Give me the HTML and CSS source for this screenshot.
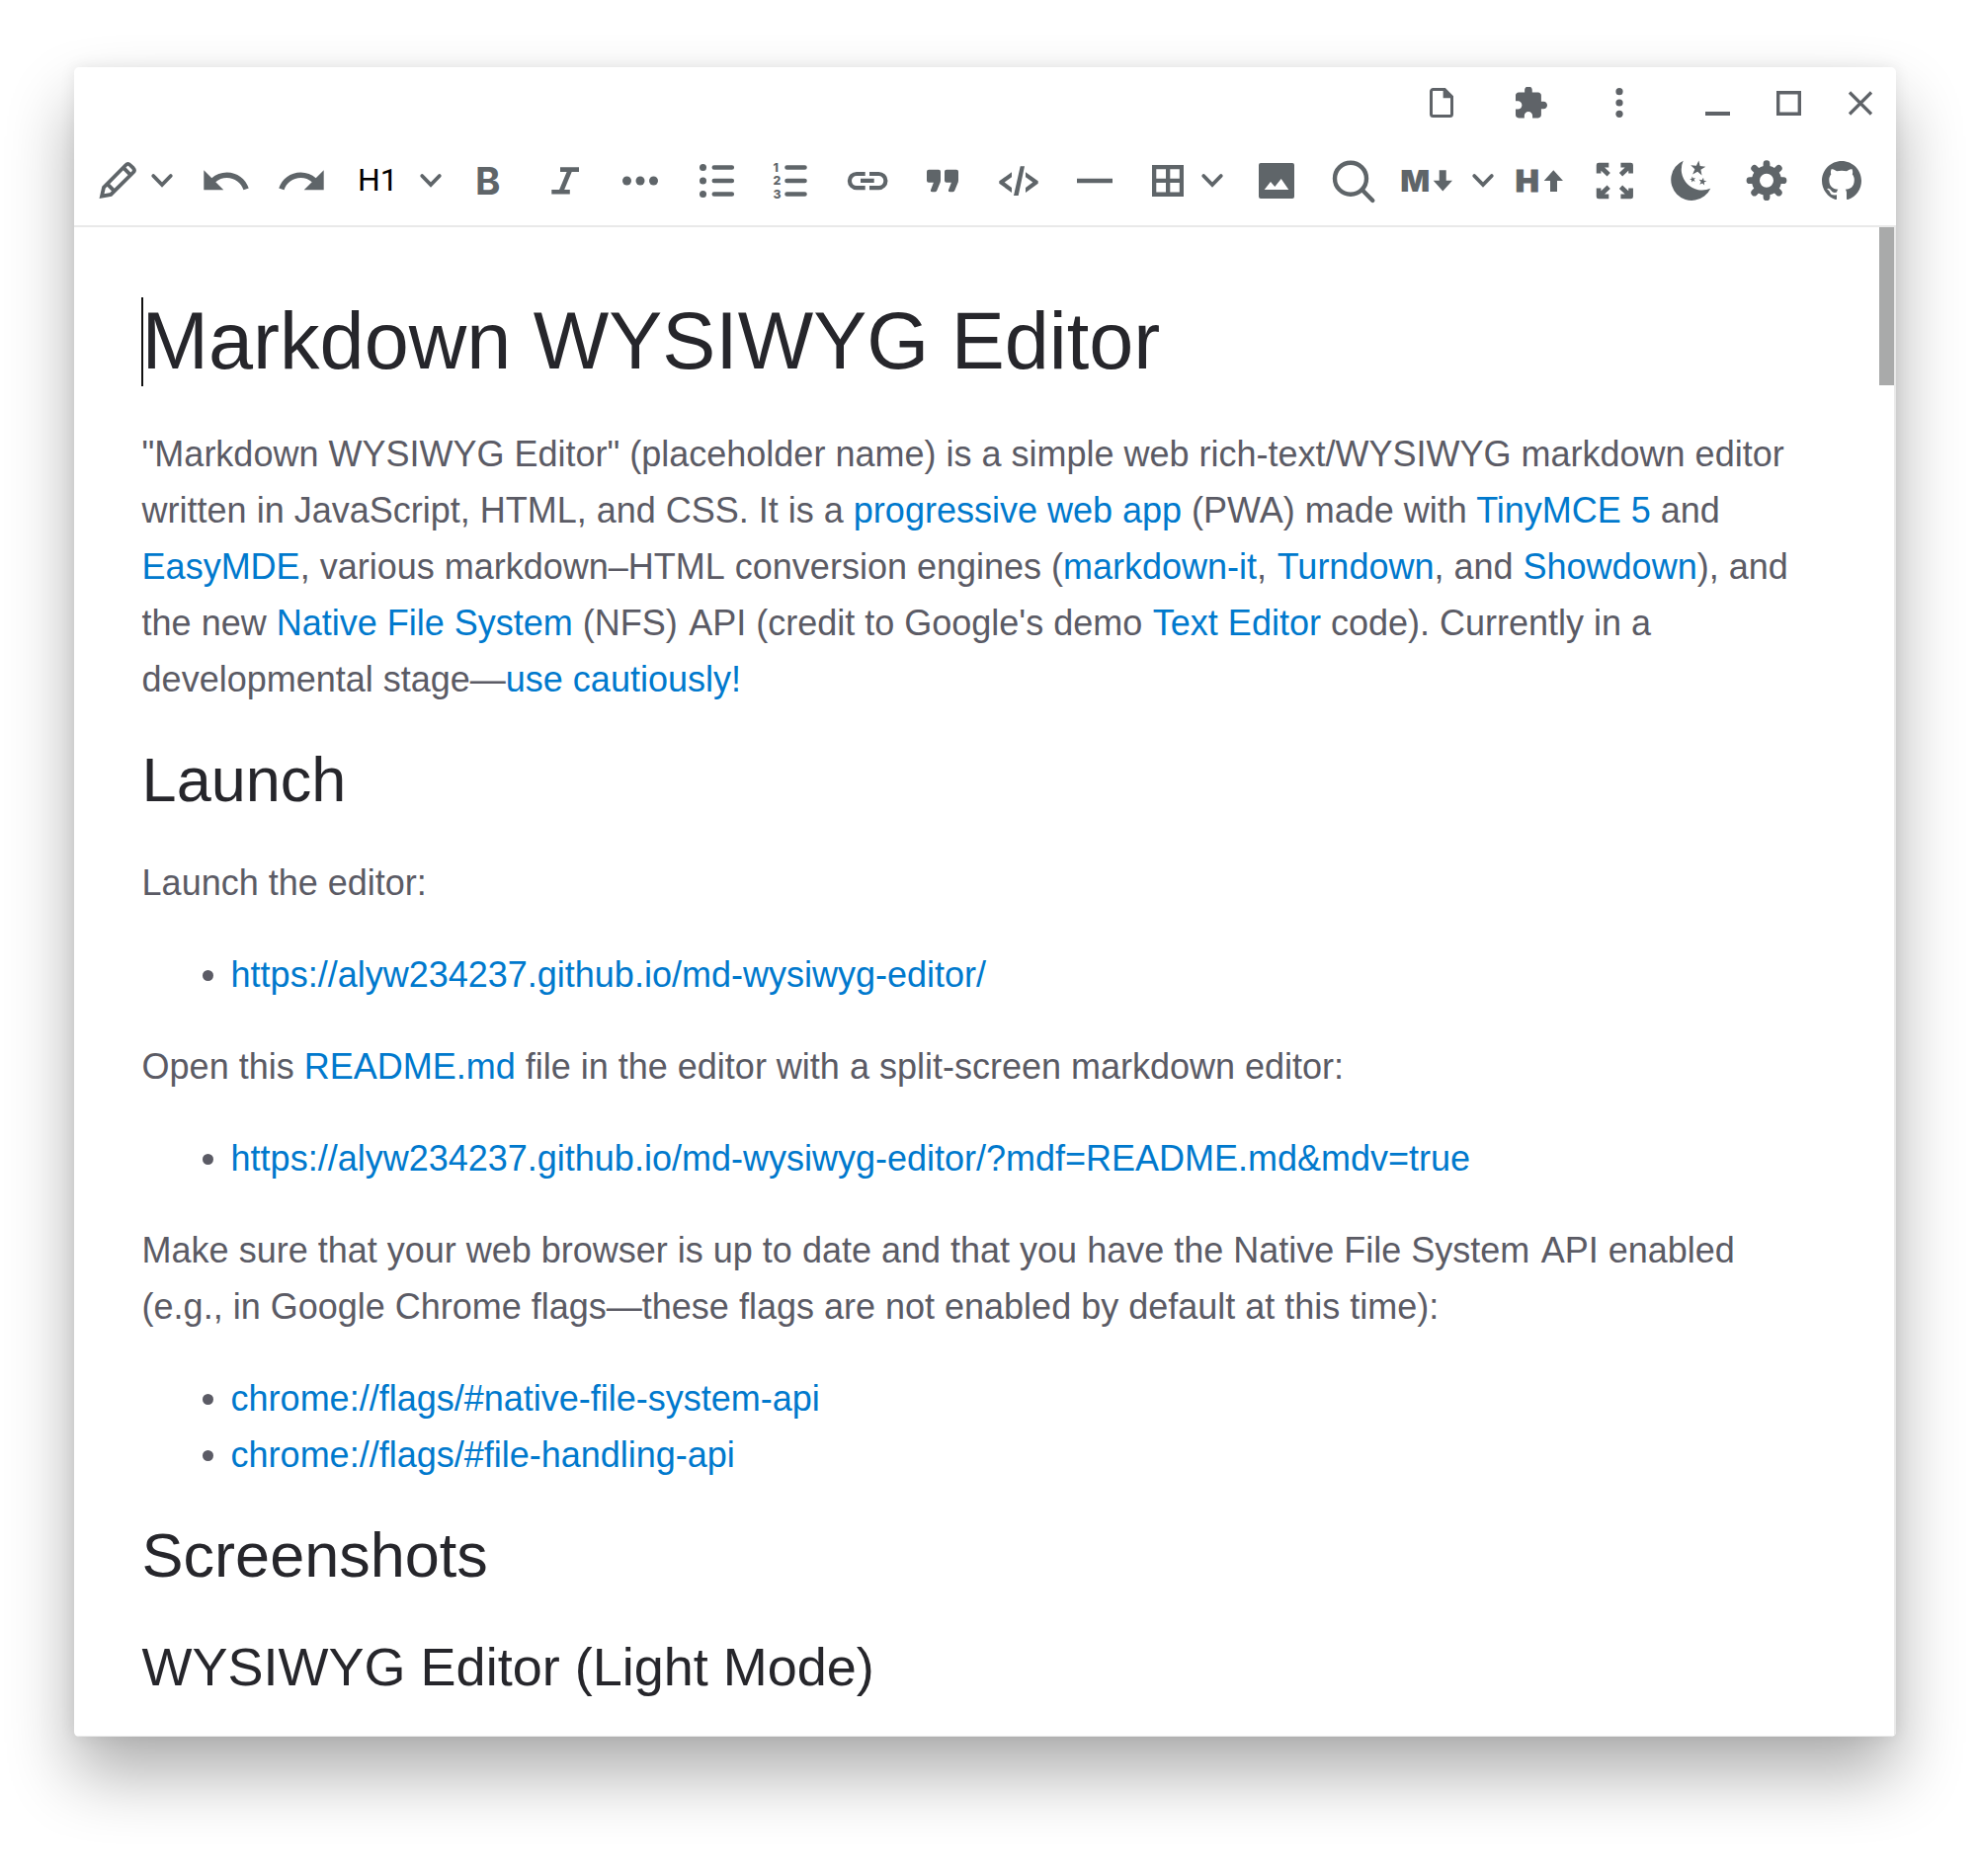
FILE: index.html
```html
<!DOCTYPE html>
<html lang="en">
<head>
<meta charset="utf-8">
<title>Markdown WYSIWYG Editor</title>
<link rel="stylesheet" href="styles.css">
</head>
<body>
<svg class="defs" aria-hidden="true">
  <symbol id="chevron" viewBox="0 0 26 48"><path d="M4.2 19 13 28 21.8 19" fill="none" stroke="currentColor" stroke-width="3.8" stroke-linecap="round"/></symbol>
  <symbol id="undo" viewBox="1.41 1.01 21.62 21.62"><path d="M12.5 8c-2.65 0-5.05.99-6.9 2.6L2 7v9h9l-3.62-3.62c1.39-1.16 3.16-1.88 5.12-1.88 3.54 0 6.55 2.31 7.6 5.5l2.37-.78C21.08 11.03 17.15 8 12.5 8z"/></symbol>
  <path id="star" d="M0-1 .235-.324 .951-.309 .38.124 .588.809 0 .4-.588.809-.38.124-.951-.309-.235-.324z"/>
  <path id="corner" d="M4.1 16.5V8.1H14.3M5 9l9.2 8.8" fill="none" stroke="currentColor" stroke-width="4.700" stroke-linejoin="round"/>
</svg>
<main class="window">
  <header class="titlebar">
    <svg class="w-file" viewBox="0 0 24 32"><path d="M15.2 2.5H3.5a2 2 0 0 0-2 2v23a2 2 0 0 0 2 2h17a2 2 0 0 0 2-2V9.8z" fill="none" stroke="currentColor" stroke-width="3"/><path d="M13.6 2v9.2H23L15.5 2z"/></svg>
    <svg class="w-puzzle" viewBox="2 1.4 21 21"><path d="M20.500 11H19V7c0-1.100-.9-2-2-2h-4V3.500C13 2.120 11.880 1 10.500 1S8 2.120 8 3.500V5H4c-1.100 0-1.990.9-1.990 2v3.800H3.500c1.490 0 2.700 1.210 2.700 2.700s-1.210 2.700-2.700 2.700H2V20c0 1.100.9 2 2 2h3.800v-1.500c0-1.490 1.210-2.700 2.700-2.700 1.490 0 2.700 1.210 2.700 2.700V22H17c1.100 0 2-.9 2-2v-4h1.500c1.380 0 2.500-1.120 2.500-2.500S21.880 11 20.500 11z"/></svg>
    <svg class="w-dots" viewBox="0 0 8 32"><circle cx="4" cy="4.700" r="3.600"/><circle cx="4" cy="16" r="3.600"/><circle cx="4" cy="27.300" r="3.600"/></svg>
    <svg class="w-min" viewBox="0 0 25 32"><path d="M0 25h25v4H0z"/></svg>
    <svg class="w-max" viewBox="0 0 25 32"><path d="M1.700 5.700h21.600v21.600H1.700z" fill="none" stroke="currentColor" stroke-width="3.400"/></svg>
    <svg class="w-close" viewBox="0 0 26 32"><path d="M2 5.500l22 22M24 5.500l-22 22" fill="none" stroke="currentColor" stroke-width="3.200"/></svg>
  </header>
  <nav class="toolbar">
    <svg class="t-pen" viewBox="0 0 42 48"><path d="M4 39.700 6 30.700 28.400 8Q30.500 5.900 32.600 8L35.900 11.200Q38 13.400 35.900 15.500L13.200 37.900ZM9.500 27.200l7.200 7.200M25.800 10.700l7.400 7.400" fill="none" stroke="currentColor" stroke-width="3.800"/></svg>
    <svg class="t-chev pen-menu"><use href="#chevron"/></svg>
    <svg class="t-undo"><use href="#undo"/></svg>
    <svg class="t-redo"><use href="#undo"/></svg>
    <span class="t-format">H1</span>
    <svg class="t-chev format-menu"><use href="#chevron"/></svg>
    <svg class="t-bold" viewBox="0 0 28 48"><text class="glyph bold" x="1" y="38" textLength="25.500" lengthAdjust="spacingAndGlyphs">B</text></svg>
    <svg class="t-italic" viewBox="0 0 32 48"><path d="M11 12.600h19M2.300 35.200h18.500M21 13 11.800 35" fill="none" stroke="currentColor" stroke-width="4.600"/></svg>
    <svg class="t-more" viewBox="0 0 40 48"><circle cx="6.500" cy="24" r="4.500"/><circle cx="20" cy="24" r="4.500"/><circle cx="33.500" cy="24" r="4.500"/></svg>
    <svg class="t-ul" viewBox="0 0 40 48"><circle cx="5.500" cy="10.500" r="3.500"/><circle cx="5.500" cy="24" r="3.500"/><circle cx="5.500" cy="37.500" r="3.500"/><path d="M16.800 10.500h18M16.800 24h18M16.800 37.500h18" stroke="currentColor" stroke-width="4.600" stroke-linecap="round"/></svg>
    <svg class="t-ol" viewBox="0 0 38 48"><g class="digits"><text x="1.500" y="15">1</text><text x="1.500" y="28.300">2</text><text x="1.500" y="41.800">3</text></g><path d="M15.500 10.500h18M15.500 24h18M15.500 37.500h18" stroke="currentColor" stroke-width="4.600" stroke-linecap="round"/></svg>
    <svg class="t-link" viewBox="0 0 44 48"><path d="M19.700 17h-8.700a7.100 7.100 0 0 0 0 14.200h8.700M24 17h9.300a7.100 7.100 0 0 1 0 14.200H24M15 23.800h13.700" fill="none" stroke="currentColor" stroke-width="4.200"/></svg>
    <svg class="t-quote" viewBox="0 0 36 48"><path id="q" d="M4 12.700h10a2 2 0 0 1 2 2v9c0 1-.3 2-.8 3l-3 7.200q-.7 1.400-2 1.400H7.600q-2.400 0-1.400-2.500l2.700-7H4a2 2 0 0 1-2-2v-9.100a2 2 0 0 1 2-2z"/><use href="#q" x="18"/></svg>
    <svg class="t-code" viewBox="0 0 44 48"><path d="M15 15.300 2.300 24.300v2.400L15 36v-5l-7.300-5.600 7.300-5.100zM29 15.300l12.700 9v2.400L29 36v-5l7.300-5.600-7.300-5.100zM23.700 9.300H28L21.700 39H17z"/></svg>
    <svg class="t-hr" viewBox="0 0 40 48"><path d="M2 21.800h36v4.400H2z"/></svg>
    <svg class="t-table" viewBox="0 0 36 48"><path fill-rule="evenodd" d="M2 8h32v32H2zM6.300 12.300v9.500H16v-9.500zM20.300 12.300v9.500h9.500v-9.500zM6.300 26v9.500H16V26zM20.300 26v9.500h9.500V26z"/></svg>
    <svg class="t-chev table-menu"><use href="#chevron"/></svg>
    <svg class="t-image" viewBox="0 0 40 48"><path fill-rule="evenodd" d="M4 6h32a2 2 0 0 1 2 2v32a2 2 0 0 1-2 2H4a2 2 0 0 1-2-2V8a2 2 0 0 1 2-2zM7.700 33h24.600L24.700 22 18.300 30 14 25z"/></svg>
    <svg class="t-search" viewBox="0 0 46 48"><g fill="none" stroke="currentColor" stroke-width="4.400" stroke-linecap="round"><circle cx="20" cy="21.700" r="16"/><path d="M31.500 33 42.300 44"/></g></svg>
    <svg class="t-md" viewBox="0 0 56 48"><text class="glyph mark" x=".2" y="35" textLength="30" lengthAdjust="spacingAndGlyphs">M</text><path d="M39.700 13.300h7v10.400H53L43.300 34.500 33.700 23.700h6z"/></svg>
    <svg class="t-chev md-menu"><use href="#chevron"/></svg>
    <svg class="t-html" viewBox="0 0 52 48"><text class="glyph mark heavy" x=".7" y="34.700" textLength="24" lengthAdjust="spacingAndGlyphs">H</text><path d="M36 35h7V24h6L39.300 13.300 29.700 24H36z"/></svg>
    <svg class="t-full" viewBox="0 0 42 48"><use href="#corner"/><use href="#corner" transform="matrix(-1 0 0 1 40.700 0)"/><use href="#corner" transform="matrix(1 0 0 -1 0 48)"/><use href="#corner" transform="matrix(-1 0 0 -1 40.700 48)"/></svg>
    <svg class="t-moon" viewBox="0 0 46 48"><path d="M15.700 3.700A21 21 0 1 0 43.300 31.700 21 21 0 0 1 15.700 3.700z"/><use href="#star" transform="translate(30.500 11.500) rotate(6) scale(8)"/><use href="#star" transform="translate(25.300 22.700) rotate(-12) scale(3.200)"/><use href="#star" transform="translate(35.300 24.800) rotate(10) scale(4.200)"/></svg>
    <svg class="t-gear" viewBox="-22 -23.700 44 48"><circle r="11" fill="none" stroke="currentColor" stroke-width="8"/><path d="M0-13v-4M0 13v4M-13 0h-4M13 0h4M-9.500-9.500l-2.800-2.800M9.500-9.500l2.800-2.800M-9.500 9.500l-2.800 2.800M9.500 9.500l2.800 2.800" stroke="currentColor" stroke-width="6.800" stroke-linecap="round"/></svg>
    <svg class="t-github" viewBox="-.8 -1.600 17.600 19.200"><path fill-rule="evenodd" d="M8 0C3.580 0 0 3.580 0 8c0 3.540 2.290 6.530 5.470 7.590.4.070.55-.17.55-.38 0-.19-.01-.82-.01-1.490-2.010.37-2.530-.49-2.690-.94-.09-.23-.48-.94-.82-1.130-.28-.15-.68-.52-.01-.53.63-.01 1.080.58 1.230.82.72 1.210 1.870.87 2.330.66.07-.52.28-.87.51-1.070-1.780-.2-3.640-.89-3.640-3.950 0-.87.31-1.590.82-2.150-.08-.2-.36-1.020.08-2.120 0 0 .67-.21 2.200.82.64-.18 1.320-.27 2-.27s1.360.09 2 .27c1.530-1.040 2.200-.82 2.200-.82.44 1.100.16 1.920.08 2.120.51.560.82 1.270.82 2.150 0 3.070-1.870 3.750-3.650 3.950.29.25.54.730.54 1.480 0 1.070-.01 1.930-.01 2.200 0 .21.15.46.55.38A8.010 8.010 0 0 0 16 8c0-4.420-3.580-8-8-8z"/></svg>
  </nav>
  <div class="editor">
    <article class="document">
      <h1><i class="caret"></i>Markdown WYSIWYG Editor</h1>
      <p>"Markdown WYSIWYG Editor" (placeholder name) is a simple web rich-text/WYSIWYG markdown editor written in JavaScript, HTML, and CSS. It is a <a>progressive web app</a> (PWA) made with <a>TinyMCE 5</a> and <a>EasyMDE</a>, various markdown–HTML <span class="unkern">conversion</span> engines (<a>markdown-it</a>, <a class="unkern-t">Turndown</a>, and <a>Showdown</a>), and the new <a>Native File System</a> (NFS) <span class="unkern">API</span> (credit to Google's demo <a class="unkern-t">Text Editor</a> code). Currently in a developmental stage—<a>use cautiously!</a></p>
      <h2>Launch</h2>
      <p>Launch the editor:</p>
      <ul><li><a>https://alyw234237.github.io/md-wysiwyg-editor/</a></li></ul>
      <p>Open this <a>README.md</a> file in the editor with a split-screen markdown editor:</p>
      <ul><li><a>https://alyw234237.github.io/md-wysiwyg-editor/?mdf=README.md&amp;mdv=true</a></li></ul>
      <p>Make sure that your web browser is up to date and that you have the Native File System <span class="unkern">API</span> enabled (e.g., in Google Chrome flags—these flags are not enabled by default at this time):</p>
      <ul><li><a>chrome://flags/#native-file-system-api</a></li><li><a>chrome://flags/#file-handling-api</a></li></ul>
      <h2>Screenshots</h2>
      <h3>WYSIWYG Editor (Light Mode)</h3>
    </article>
    <div class="scrollbar"><div class="thumb"></div></div>
  </div>
</main>
</body>
</html>
```
FILE: styles.css
```css
* { box-sizing: border-box; }
body { margin: 0; padding: 68px 84px 0 75px; height: 1899px; overflow: hidden; background: #fff; font-family: "Liberation Sans", Arial, sans-serif; }
.defs { display: none; }
.window { display: flex; flex-direction: column; width: 1844px; height: 1690px; overflow: hidden; border-radius: 5px; background: #fff; box-shadow: 0 38px 68px rgba(0, 0, 0, .32), 0 0 16px rgba(0, 0, 0, .08); }

/* Title bar */
.titlebar { display: flex; align-items: center; height: 72px; flex: none; color: #5f6368; }
svg { display: block; flex: none; fill: currentColor; }
.titlebar svg { height: 32px; }
.w-file { width: 24px; margin-left: 1372px; }
.w-puzzle { width: 32px; margin-left: 63px; }
.w-dots { width: 8px; margin-left: 69px; }
.w-min { width: 25px; margin-left: 83px; }
.w-max { width: 25px; margin-left: 47px; }
.w-close { width: 26px; margin-left: 47px; }

/* Toolbar */
.toolbar { display: flex; align-items: flex-start; flex: none; height: 90px; padding-top: 19px; border-bottom: 2px solid #e9e9e9; color: #5f6569; }
.toolbar svg { height: 48px; }
.t-chev { width: 26px; }
.t-pen { width: 42px; margin-left: 24px; }
.pen-menu { margin-left: 10px; }
.t-undo { width: 48px; margin-left: 28px; }
.t-redo { width: 48px; margin-left: 28px; transform: scaleX(-1); }
.t-format { width: 42px; margin-left: 33px; color: #000; font: 400 32px/47px Roboto, sans-serif; }
.format-menu { margin-left: 19px; }
.t-bold { width: 28px; margin-left: 31px; }
.t-italic { width: 32px; margin-left: 48px; }
.t-more { width: 40px; margin-left: 40px; }
.t-ul { width: 40px; margin-left: 38px; }
.t-ol { width: 38px; margin-left: 35px; }
.t-link { width: 44px; margin-left: 37px; }
.t-quote { width: 36px; margin-left: 36px; }
.t-code { width: 44px; margin-left: 37px; }
.t-hr { width: 40px; margin-left: 35px; }
.t-table { width: 36px; margin-left: 36px; }
.table-menu { margin-left: 14px; }
.t-image { width: 40px; margin-left: 32px; }
.t-search { width: 46px; margin-left: 35px; }
.t-md { width: 56px; margin-left: 24px; }
.md-menu { margin-left: 15px; }
.t-html { width: 52px; margin-left: 19px; }
.t-full { width: 42px; margin-left: 29px; }
.t-moon { width: 46px; margin-left: 32px; }
.t-gear { width: 44px; margin-left: 32px; }
.t-github { width: 44px; margin-left: 32px; }
.glyph { font-family: Inter, sans-serif; }
.bold { font-size: 38.5px; font-weight: 700; }
.mark { font-size: 30px; font-weight: 900; }
.heavy { font-size: 29.5px; stroke: currentColor; stroke-width: .8px; }
.digits { font: 800 12.300px Inter, sans-serif; }

/* Editing area */
.editor { display: flex; flex: 1; min-height: 0; overflow: hidden; border: solid #e9e9e9; border-width: 0 2px 1px 0; }
.document { flex: 1; padding: 67px 83px 0 68.6px; color: #5b5b65; font-size: 36px; line-height: 57px; }
.document p, .document ul { margin: 0 0 36px; }
.document ul { padding-left: 90px; }
h1, h2, h3 { margin: 0; color: #26262b; font-weight: 400; }
h1 { position: relative; margin-bottom: 37px; font-size: 81px; line-height: 97px; }
h2 { margin-bottom: 39px; font-size: 63px; line-height: 74px; }
h3 { margin-top: 44px; font-size: 54px; line-height: 64px; }
a { color: #0079cd; }
/* Restores the word space that font kerning tightens next to L, A and T */
.unkern { margin-left: 1.4px; }
.unkern-t { margin-left: .6px; }
.caret { position: absolute; left: -.6px; top: 4px; width: 2px; height: 90px; background: #111; }
.scrollbar { width: 15px; }
.thumb { height: 160px; background: #a9aaaa; }
```
